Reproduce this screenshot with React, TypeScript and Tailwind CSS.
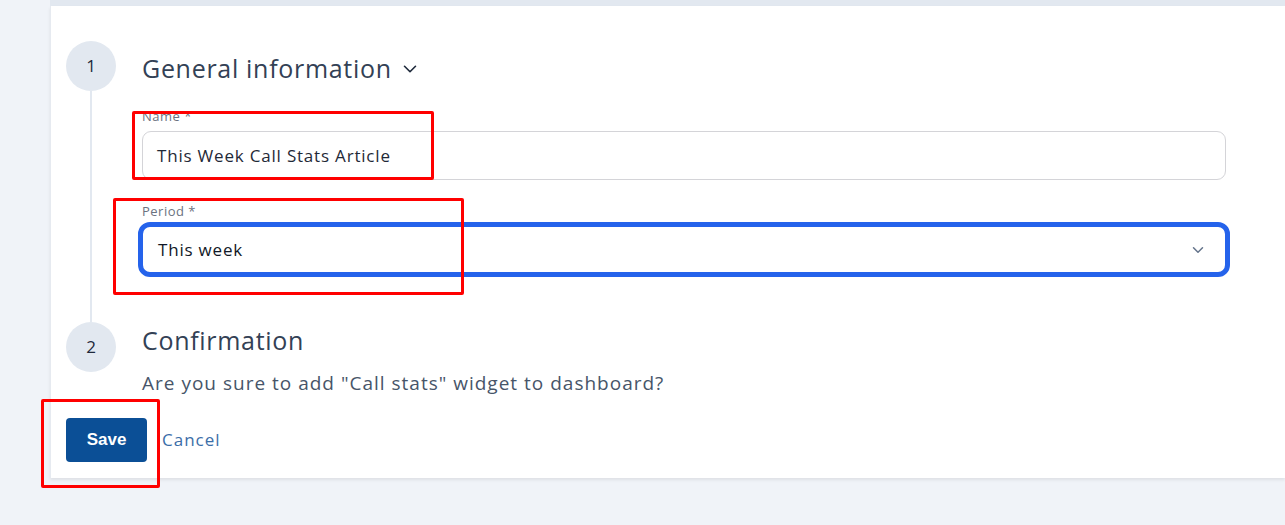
import { ChevronDown } from "lucide-react";

const FONT = "font-['Open_Sans','Liberation_Sans',sans-serif]";

const StepCircle = ({ n }: { n: number }) => (
  <div className="w-[50px] h-[50px] shrink-0 rounded-full bg-[#e2e8f0] flex items-center justify-center text-[17px] text-[#1e293b]">
    {n}
  </div>
);

const Annotation = ({ className }: { className: string }) => (
  <div className={`absolute border-[3px] border-[#ff0000] rounded-[2px] pointer-events-none ${className}`} />
);

export default function App() {
  return (
    <div className={`relative w-[1285px] h-[525px] overflow-hidden bg-[#f0f3f8] flex ${FONT}`}>
      <div className="w-[50px] shrink-0 bg-[#f0f3f8]" />

      <div className="flex-1 flex flex-col">
        <div className="h-[6px] bg-[#e2e8f0]" />
        <div className="bg-white border-l border-[#e6eaf0] shadow-[0_2px_3px_rgba(0,0,0,0.08)] pl-[15px] pr-[59px] pt-[35px] pb-[16px]">
          {/* step 1 */}
          <div className="flex gap-[26px]">
            <div className="flex flex-col items-center">
              <StepCircle n={1} />
              <div className="w-[2px] flex-1 bg-[#e2e8f0]" />
            </div>
            <div className="flex-1 pb-[45px]">
              <div className="mt-[11px] h-8 flex items-center gap-[7px]">
                <h2 className="text-[25px] tracking-[0.7px] text-[#334155] leading-8">General information</h2>
                <ChevronDown size={22} strokeWidth={1.75} className="text-[#1e293b] mt-[2px]" />
              </div>
              <label className="block mt-[24px] text-[13px] tracking-[0.5px] leading-4 text-[#6b7280]">Name *</label>
              <div className="mt-[7px] h-[49px] rounded-[9px] border border-[#d4d4d8] flex items-center px-[14px] text-[17px] tracking-[0.8px] text-[#1f2937]">
                This Week Call Stats Article
              </div>
              <label className="block mt-[23px] text-[13px] tracking-[0.5px] leading-4 text-[#6b7280]">Period *</label>
              <div className="mt-[3px] -mx-[4px] h-[55px] rounded-[12px] border-[5px] border-[#2563eb] flex items-center justify-between pl-[15px] pr-[18px] text-[17px] tracking-[0.8px] text-[#111827]">
                <span>This week</span>
                <ChevronDown size={18} strokeWidth={2} className="text-[#64748b]" />
              </div>
            </div>
          </div>

          {/* step 2 */}
          <div className="flex gap-[26px]">
            <StepCircle n={2} />
            <div className="flex-1">
              <h2 className="mt-[2px] text-[25px] tracking-[0.7px] text-[#334155] leading-8">Confirmation</h2>
              <p className="mt-[15px] text-[19px] tracking-[1px] leading-6 text-[#475569]">
                Are you sure to add "Call stats" widget to dashboard?
              </p>
            </div>
          </div>

          <div className="mt-[23px] flex items-center gap-[15px]">
            <button className="w-[81px] h-[44px] rounded-[4px] bg-[#0b4f96] text-white font-bold text-[17px] font-['Liberation_Sans',sans-serif]">
              Save
            </button>
            <a className="text-[17px] tracking-[1px] text-[#3b6ea8]">Cancel</a>
          </div>
        </div>
      </div>

      <Annotation className="left-[132px] top-[111px] w-[302px] h-[69px]" />
      <Annotation className="left-[113px] top-[198px] w-[351px] h-[97px]" />
      <Annotation className="left-[41px] top-[399px] w-[119px] h-[89px]" />
    </div>
  );
}
